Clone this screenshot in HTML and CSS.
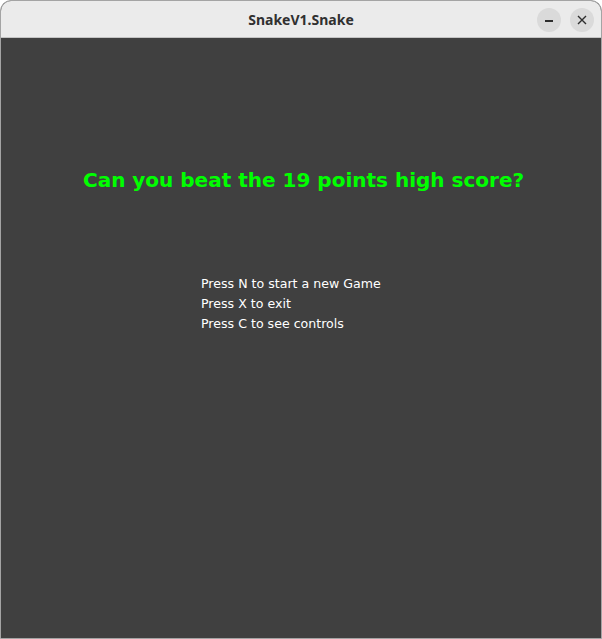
FILE: index.html
```html
<!DOCTYPE html>
<html>
<head>
<meta charset="utf-8">
<link rel="stylesheet" href="styles.css">
</head>
<body>
<div class="window">
  <div class="titlebar">
    <div class="title">SnakeV1.Snake</div>
    <div class="controls">
      <div class="btn"><span class="min"></span></div>
      <div class="btn">
        <svg width="10" height="10" viewBox="0 0 10 10"><path d="M1 1L9 9M9 1L1 9" stroke="#2e2e2e" stroke-width="1.4" fill="none"/></svg>
      </div>
    </div>
  </div>
  <div class="canvas">
    <div class="headline">Can you beat the 19 points high score?</div>
    <div class="menu">
      <div class="line">Press N to start a new Game</div>
      <div class="line">Press X to exit</div>
      <div class="line">Press C to see controls</div>
    </div>
  </div>
</div>
</body>
</html>
```
FILE: styles.css
```css
html, body {
  margin: 0;
  padding: 0;
  background: #ffffff;
}
.window {
  width: 602px;
  height: 639px;
  box-sizing: border-box;
  display: flex;
  flex-direction: column;
  border: 1px solid #a4a4a4;
  border-radius: 11px 11px 0 0;
  overflow: hidden;
  background: #404040;
}
.titlebar {
  height: 36px;
  flex: none;
  background: #ebebeb;
  border-bottom: 1px solid #c4c4c4;
  display: flex;
  align-items: center;
  justify-content: center;
  position: relative;
}
.title {
  font-family: "Noto Sans", sans-serif;
  font-weight: 700;
  font-size: 14px;
  color: #303030;
  padding-top: 1px;
}
.controls {
  position: absolute;
  right: 7px;
  top: 7px;
  display: flex;
  gap: 9px;
}
.btn {
  width: 24px;
  height: 24px;
  border-radius: 50%;
  background: #dadada;
  display: flex;
  align-items: center;
  justify-content: center;
}
.min {
  display: block;
  width: 8px;
  height: 1.5px;
  background: #2e2e2e;
  margin-top: 2px;
}
.canvas {
  flex: 1;
  display: flex;
  flex-direction: column;
  align-items: center;
}
.headline {
  margin-top: 130px;
  padding-left: 5px;
  font-family: "DejaVu Sans", "Noto Sans", sans-serif;
  font-weight: 700;
  font-size: 20px;
  line-height: 24px;
  color: #00ff00;
}
.menu {
  align-self: flex-start;
  margin-left: 200px;
  margin-top: 82px;
  font-family: "DejaVu Sans", "Noto Sans", sans-serif;
  font-size: 12.6px;
  line-height: 20px;
  color: #ffffff;
}
```
